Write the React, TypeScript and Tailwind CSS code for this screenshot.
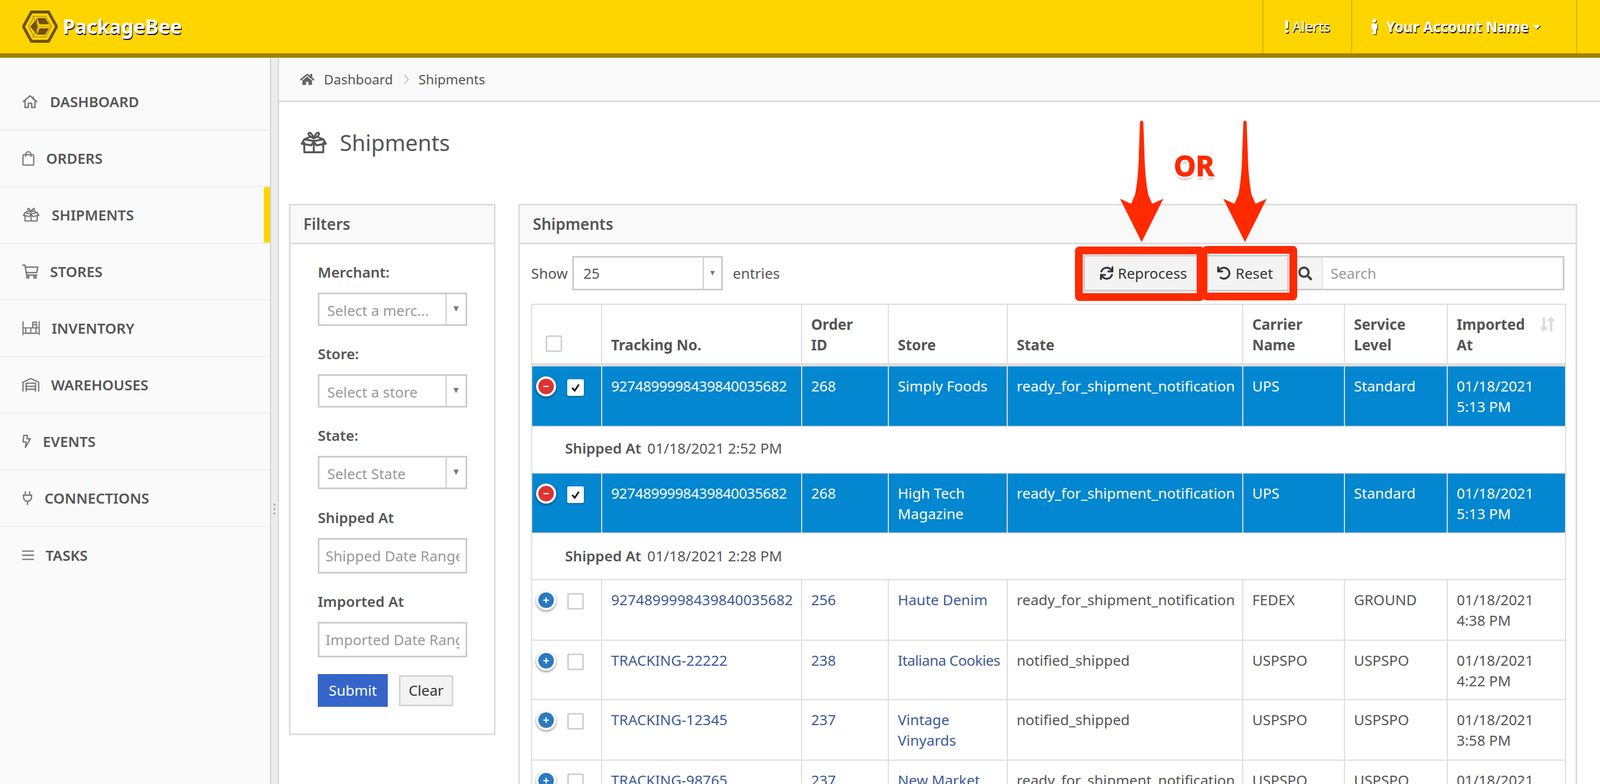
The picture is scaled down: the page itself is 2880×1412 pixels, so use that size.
import React from "react";
import { FaSync, FaUndo, FaSearch, FaHome, FaMale, FaLongArrowAltDown, FaLongArrowAltUp, FaCaretDown } from "react-icons/fa";

const ic = { fill: "none", stroke: "#777", strokeWidth: 2.5, strokeLinecap: "round" as const, strokeLinejoin: "round" as const };

const Logo = () => (
  <svg width="64" height="58" viewBox="0 0 62 56" className="shrink-0">
    <polygon points="16,2.5 46,2.5 60,28 46,53.5 16,53.5 2,28" fill="none" stroke="#6d5019" strokeWidth="5" strokeLinejoin="round" />
    <polygon points="21,10 41,10 51,28 41,46 21,46 11,28" fill="none" stroke="#b08b10" strokeWidth="1.5" />
    <polygon points="14,28 25.5,14 26.5,28 25.5,42" fill="#6d5019" />
    <polygon points="26,13 40,13 47,24 30,24" fill="#6d5019" />
    <polygon points="30,31 47,31 40,42 26,42" fill="#6d5019" />
    <path d="M28 28 L51 28 M28 28 L18 9 M28 28 L18 47" stroke="#b08b10" strokeWidth="1.2" fill="none" />
  </svg>
);

const HomeIcon = () => (
  <svg width="28" height="24" viewBox="0 0 28 24" {...ic}>
    <path d="M2 12 L14 1.5 L26 12" />
    <path d="M5 10 V22.5 H11 V15 H17 V22.5 H23 V10" />
    <path d="M20 4 V8" />
  </svg>
);
const BagIcon = () => (
  <svg width="24" height="29" viewBox="0 0 24 29" {...ic}>
    <rect x="1.5" y="7" width="21" height="20.5" rx="2" />
    <path d="M7 10 V6 C7 -0.2 17 -0.2 17 6 V10" />
  </svg>
);
const GiftIcon = ({ s = 1 }: { s?: number }) => (
  <svg width={32 * s} height={26 * s} viewBox="0 0 32 26" {...ic} strokeWidth={2.2} stroke={s > 1 ? "#555" : "#777"}>
    <path d="M5 13 V24 H16 H27 V13" />
    <path d="M16 24 V11" />
    <path d="M2 14 L5 9 L16 11 L27 9 L30 14 L19 16 L16 11 L13 16 Z" />
    <path d="M5 9 L12 6 M27 9 L20 6" />
    <path d="M16 8 C12 6 9 4 10 2 C11 0 14 2 16 8 C18 2 21 0 22 2 C23 4 20 6 16 8 Z" />
  </svg>
);
const CartIcon = () => (
  <svg width="29" height="26" viewBox="0 0 29 26" {...ic}>
    <path d="M1 1.5 H5 L8 19.5 H26" />
    <path d="M6 5 H28 L26 15 H7.5" />
    <circle cx="10" cy="23" r="2" />
    <circle cx="23" cy="23" r="2" />
  </svg>
);
const ShelfIcon = () => (
  <svg width="33" height="27" viewBox="0 0 33 27" {...ic} strokeWidth={2.2} strokeLinecap="butt">
    <path d="M1.5 0 V26 M31.5 0 V26" />
    <path d="M1.5 22.5 H31.5 M1.5 12.5 H31.5" />
    <path d="M6.5 12.5 V22.5 H25.5 V12.5 M16 12.5 V22.5" />
    <path d="M19.5 12.5 V2 H26.5 V12.5 M19.5 6.5 H26.5" />
  </svg>
);
const WareIcon = () => (
  <svg width="33" height="26" viewBox="0 0 33 26" {...ic} strokeLinecap="butt">
    <path d="M1.5 26 V8 L16.5 1 L31.5 8 V26" />
    <path d="M7.5 26 V10 H25.5 V26" />
    <path d="M7.5 16 H25.5 M7.5 21.5 H25.5" />
  </svg>
);
const BoltIcon = () => (
  <svg width="17" height="26" viewBox="0 0 17 26" {...ic}>
    <path d="M3 1.5 H10 L9 8 H15.5 L6 24.5 L7.5 14 H1.5 Z" />
  </svg>
);
const PlugIcon = () => (
  <svg width="20" height="26" viewBox="0 0 20 26" {...ic} strokeLinecap="butt">
    <path d="M6 0 V7 M14 0 V7" />
    <path d="M1 7.5 H19 M2.5 7.5 V12 C2.5 16 6 19 10 19 C14 19 17.5 16 17.5 12 V7.5" />
    <path d="M10 19 V26" />
  </svg>
);
const MenuIcon = () => (
  <svg width="23" height="20" viewBox="0 0 23 20" {...ic} strokeLinecap="butt">
    <path d="M0 2 H23 M0 10 H23 M0 18 H23" />
  </svg>
);

const nav = [
  { label: "DASHBOARD", icon: <HomeIcon />, w: "w-[29px]" },
  { label: "ORDERS", icon: <BagIcon />, w: "w-[22px]" },
  { label: "SHIPMENTS", icon: <GiftIcon />, w: "w-[32px]", active: true },
  { label: "STORES", icon: <CartIcon />, w: "w-[29px]" },
  { label: "INVENTORY", icon: <ShelfIcon />, w: "w-[32px]" },
  { label: "WAREHOUSES", icon: <WareIcon />, w: "w-[31px]" },
  { label: "EVENTS", icon: <BoltIcon />, w: "w-[16px]" },
  { label: "CONNECTIONS", icon: <PlugIcon />, w: "w-[19px]" },
  { label: "TASKS", icon: <MenuIcon />, w: "w-[21px]", last: true },
];

const Sidebar = () => (
  <aside className="w-[486px] shrink-0 bg-[#fafafa] pt-[29px]">
    {nav.map((n) => (
      <div key={n.label} className={`relative flex h-[102px] items-center gap-[21px] pl-[40px] text-[26px] font-semibold text-[#555] ${n.last ? "" : "border-b-2 border-[#efefef]"}`}>
        <span className={`${n.w} flex shrink-0 items-center`}>{n.icon}</span>
        <span className="leading-none">{n.label}</span>
        {n.active && <span className="absolute right-0 top-0 bottom-0 w-[11px] bg-[#ffd500]" />}
      </div>
    ))}
  </aside>
);

const Splitter = () => (
  <div className="flex w-[16px] shrink-0 flex-col items-center justify-start border-x-2 border-[#d2d2d2] bg-[#ececec] pt-[803px]">
    <div className="flex flex-col gap-[4px]">
      <span className="h-[4px] w-[4px] bg-[#bbb]" />
      <span className="h-[4px] w-[4px] bg-[#bbb]" />
      <span className="h-[4px] w-[4px] bg-[#bbb]" />
    </div>
  </div>
);

const shadow = "[text-shadow:1px_2px_0_#000]";

const Header = () => (
  <header className="flex h-[104px] border-b-[8px] border-[#a08000] bg-[#ffd500] pl-[40px] pr-[41px]">
    <div className="flex items-center gap-[9px]">
      <Logo />
      <span className={`text-[35.5px] font-bold text-white ${shadow}`}>PackageBee</span>
    </div>
    <div className="ml-auto flex">
      <div className={`flex w-[160px] items-center gap-[6px] border-l-2 border-[#d6b400] pl-[38px] text-[25px] text-white ${shadow}`}>
        <span className="text-[30px] font-extrabold leading-none">!</span>
        <span>Alerts</span>
      </div>
      <div className={`flex w-[407px] items-center border-x-2 border-[#d6b400] pl-[32px] text-[26px] font-bold text-white ${shadow}`}>
        <FaMale className="mr-[13px] h-[28px] w-[16px] text-white drop-shadow-[1px_1px_0_#000]" />
        <span>Your Account Name</span>
        <FaCaretDown className="ml-[3px] h-[22px] w-[22px] drop-shadow-[1px_1px_0_#000]" />
      </div>
    </div>
  </header>
);

const Arrow = ({ pos }: { pos: string }) => (
  <svg width="78" height="220" viewBox="0 0 78 220" className={`absolute top-[216px] ${pos}`}>
    <path d="M36 4 Q39 -2 42 4 L44 60 Q45 105 51 135 L58 151 L78 142 L39 220 L0 142 L20 151 L27 135 Q33 105 34 60 Z" fill="#ff2a00" />
  </svg>
);

const Select = ({ text, w = "w-[269px]", mb = "" }: { text: string; w?: string; mb?: string }) => (
  <div className={`flex h-[60px] items-stretch border-[3px] border-[#ccc] bg-white text-[26px] ${w} ${mb}`}>
    <span className="flex flex-1 items-center overflow-hidden whitespace-nowrap pl-[14px] pt-[5px] text-[#999]">{text}</span>
    <span className="flex w-[36px] items-center justify-center border-l-2 border-[#ccc] pb-[4px] text-[16px] text-[#777]">▼</span>
  </div>
);

const FilterLabel = ({ children }: { children: React.ReactNode }) => (
  <div className="mb-[18px] text-[26px] font-semibold leading-[37px] text-[#555]">{children}</div>
);

const DateInput = ({ placeholder, mb }: { placeholder: string; mb: string }) => (
  <input readOnly placeholder={placeholder} className={`block h-[64px] w-[269px] border-[3px] border-[#ccc] bg-white px-[11px] text-[26px] outline-none placeholder:text-[#999] ${mb}`} />
);

const Filters = () => (
  <section className="w-[372px] shrink-0 self-start border-[3px] border-[#ddd] bg-white">
    <div className="flex h-[70px] items-center border-b-[3px] border-[#ddd] bg-[#f9f9f9] pb-[2px] pl-[23px] text-[28px] font-semibold text-[#555]">Filters</div>
    <div className="px-[49px] pb-[48px] pt-[32px]">
      <FilterLabel>Merchant:</FilterLabel>
      <Select text="Select a merc..." mb="mb-[32px]" />
      <FilterLabel>Store:</FilterLabel>
      <Select text="Select a store" mb="mb-[32px]" />
      <FilterLabel>State:</FilterLabel>
      <Select text="Select State" mb="mb-[33px]" />
      <FilterLabel>Shipped At</FilterLabel>
      <DateInput placeholder="Shipped Date Range" mb="mb-[32px]" />
      <FilterLabel>Imported At</FilterLabel>
      <DateInput placeholder="Imported Date Range" mb="mb-[30px]" />
      <div className="flex items-center gap-[20px]">
        <button className="h-[59px] w-[126px] bg-[#3565c9] text-[26px] text-white">Submit</button>
        <button className="h-[56px] w-[98px] border-[3px] border-[#d5d5d5] bg-[#f3f3f3] text-[26px] text-[#333]">Clear</button>
      </div>
    </div>
  </section>
);

const Circle = ({ kind }: { kind: "minus" | "plus" }) => (
  <span className={`flex h-[36px] w-[36px] shrink-0 items-center justify-center rounded-full border-[4px] border-white shadow-[0_2px_4px_rgba(0,0,0,0.45)] ${kind === "minus" ? "bg-[#dd3333]" : "bg-[#2b7abf]"}`}>
    <svg width="14" height="14" viewBox="0 0 14 14" stroke="#fff" strokeWidth="2.2">
      <path d="M2 7 H12" />
      {kind === "plus" && <path d="M7 2 V12" />}
    </svg>
  </span>
);

const Check = ({ on }: { on?: boolean }) => (
  <span className={`flex h-[30px] w-[30px] shrink-0 items-center justify-center rounded-[3px] bg-white ${on ? "shadow-[0_1px_3px_rgba(0,0,0,0.4)]" : "border-[3px] border-[#d2d2d2]"}`}>
    {on && (
      <svg width="18" height="18" viewBox="0 0 18 18" fill="none" stroke="#111" strokeWidth="3">
        <path d="M3 9.5 L7.5 14.5 L15 3.5" />
      </svg>
    )}
  </span>
);

type Row = {
  h: string;
  sel?: boolean;
  track: string;
  order: string;
  store: React.ReactNode;
  state: string;
  carrier: string;
  level: string;
  time: string;
};

const TN = "927489999843984003568";
const READY = "ready_for_shipment_notification";

const rows: (Row | { detail: string; h: string; pt: string })[] = [
  { h: "h-[109px]", sel: true, track: TN + "2", order: "268", store: "Simply Foods", state: READY, carrier: "UPS", level: "Standard", time: "5:13 PM" },
  { detail: "01/18/2021 2:52 PM", h: "h-[84px]", pt: "pt-[20px]" },
  { h: "h-[108px]", sel: true, track: TN + "2", order: "268", store: "High Tech Magazine", state: READY, carrier: "UPS", level: "Standard", time: "5:13 PM" },
  { detail: "01/18/2021 2:28 PM", h: "h-[84px]", pt: "pt-[22px]" },
  { h: "h-[109px]", track: TN + "2", order: "256", store: "Haute Denim", state: READY, carrier: "FEDEX", level: "GROUND", time: "4:38 PM" },
  { h: "h-[107px]", track: "TRACKING-22222", order: "238", store: <span className="tracking-[-0.6px]">Italiana Cookies</span>, state: "notified_shipped", carrier: "USPSPO", level: "USPSPO", time: "4:22 PM" },
  { h: "h-[109px]", track: "TRACKING-12345", order: "237", store: <>Vintage<br />Vinyards</>, state: "notified_shipped", carrier: "USPSPO", level: "USPSPO", time: "3:58 PM" },
  { h: "h-[108px]", track: "TRACKING-98765", order: "237", store: "New Market", state: READY, carrier: "USPSPO", level: "USPSPO", time: "3:41 PM" },
];

const thBase = "border-r-2 border-b-[6px] border-[#ddd] pb-[14px] pl-[16px] pr-[2px] align-bottom text-left font-bold";

const DataRow = ({ r }: { r: Row }) => {
  const td = `border-r-2 border-b-2 border-[#ddd] pl-[16px] pr-[2px] pt-[17px] align-top ${r.h}`;
  const link = r.sel ? "" : "text-[#3d5a9a]";
  return (
    <tr className={r.sel ? "bg-[#0287d0] text-white" : ""}>
      <td className={`border-r-2 border-b-2 border-[#ddd] pl-[7px] pt-[18px] align-top ${r.h}`}>
        <div className="flex items-start gap-[20px]">
          <Circle kind={r.sel ? "minus" : "plus"} />
          <span className="mt-[5px]"><Check on={r.sel} /></span>
        </div>
      </td>
      <td className={`${td} ${link} ${r.sel ? "tracking-[-0.5px]" : ""}`}>{r.track}</td>
      <td className={`${td} ${link}`}>{r.order}</td>
      <td className={`${td} ${link}`}>{r.store}</td>
      <td className={td}>{r.state}</td>
      <td className={td}>{r.carrier}</td>
      <td className={td}>{r.level}</td>
      <td className={`${td} whitespace-pre-line`}>{`01/18/2021\n${r.time}`}</td>
    </tr>
  );
};

const ShipTable = () => (
  <table className="w-[1861px] table-fixed border-separate border-spacing-0 border-l-2 border-t-[2px] border-[#ddd] text-[26px] leading-[37px] text-[#555]">
    <colgroup>
      <col className="w-[126px]" />
      <col className="w-[360px]" />
      <col className="w-[156px]" />
      <col className="w-[214px]" />
      <col className="w-[424px]" />
      <col className="w-[183px]" />
      <col className="w-[185px]" />
      <col className="w-[213px]" />
    </colgroup>
    <thead>
      <tr>
        <th className="h-[111px] border-r-2 border-b-[6px] border-[#ddd] pb-[20px] pl-[24px] align-bottom"><Check /></th>
        <th className={thBase}>Tracking No.</th>
        <th className={thBase}>Order<br />ID</th>
        <th className={thBase}>Store</th>
        <th className={thBase}>State</th>
        <th className={thBase}>Carrier<br />Name</th>
        <th className={thBase}>Service<br />Level</th>
        <th className={`${thBase} relative`}>
          Imported<br />At
          <span className="absolute right-[17px] top-[20px] flex text-[#ddd]">
            <FaLongArrowAltDown className="-mr-[3px] h-[30px] w-[16px]" />
            <FaLongArrowAltUp className="h-[30px] w-[16px]" />
          </span>
        </th>
      </tr>
    </thead>
    <tbody>
      {rows.map((r, i) =>
        "detail" in r ? (
          <tr key={i}>
            <td colSpan={8} className={`border-r-2 border-b-2 border-[#ddd] pl-[59px] align-top ${r.pt} ${r.h}`}>
              <span className="mr-[11px] font-semibold">Shipped At</span>
              {r.detail}
            </td>
          </tr>
        ) : (
          <DataRow key={i} r={r} />
        )
      )}
    </tbody>
  </table>
);

const ShipmentsPanel = () => (
  <section className="w-[1906px] shrink-0 border-[3px] border-b-0 border-[#ddd] bg-white">
    <div className="flex h-[70px] items-center border-b-[3px] border-[#ddd] bg-[#f9f9f9] pb-[2px] pl-[23px] text-[28px] font-semibold text-[#555]">Shipments</div>
    <div className="px-[20px] pt-[20px]">
      <div className="mb-[23px] flex h-[64px] items-center text-[26px] text-[#555]">
        <span className="mr-[8px]">Show</span>
        <div className="flex h-[62px] w-[271px] items-stretch border-[3px] border-[#ccc] bg-white">
          <span className="flex flex-1 items-center pl-[17px]">25</span>
          <span className="flex w-[33px] items-center justify-center border-l-2 border-[#ccc] pb-[4px] text-[14px] text-[#777]">▼</span>
        </div>
        <span className="ml-[18px]">entries</span>
        <button className="ml-auto flex h-[66px] w-[208px] items-center justify-start gap-[8px] border-[3px] border-[#ccc] bg-[#f3f3f3] pl-[27px] text-[26px] text-[#333]">
          <FaSync className="h-[24px] w-[24px]" />Reprocess
        </button>
        <button className="ml-[14px] flex h-[66px] w-[148px] items-center justify-start gap-[9px] border-[3px] border-[#ccc] bg-[#f3f3f3] pl-[16px] text-[26px] text-[#333]">
          <FaUndo className="h-[24px] w-[24px]" />Reset
        </button>
        <span className="flex h-[62px] w-[61px] items-center justify-end border-y-[3px] border-r-2 border-[#ccc] border-r-[#e5e5e5] bg-[#f5f5f5] pr-[17px] text-[#444]">
          <FaSearch className="h-[25px] w-[25px]" />
        </span>
        <input readOnly placeholder="Search" className="h-[62px] w-[435px] border-y-[3px] border-r-[3px] border-[#ccc] bg-white pl-[14px] text-[26px] outline-none placeholder:text-[#999]" />
      </div>
      <ShipTable />
    </div>
  </section>
);

export default function App() {
  return (
    <div className="relative h-[1412px] w-[2880px] overflow-hidden bg-white font-['Open_Sans',sans-serif]">
      <Header />
      <div className="flex h-[1308px]">
        <Sidebar />
        <Splitter />
        <main className="min-w-0 flex-1">
          <div className="flex h-[80px] items-center border-b-[3px] border-[#ddd] bg-[#f9f9f9] pl-[38px] text-[24px] text-[#555]">
            <FaHome className="mr-[17px] h-[24px] w-[26px] text-[#666]" />
            <span>Dashboard</span>
            <svg width="10" height="18" viewBox="0 0 10 18" className="ml-[20px] mr-[16px]" fill="none" stroke="#c4c4c4" strokeWidth="2"><path d="M1 1 L8 9 L1 17" /></svg>
            <span>Shipments</span>
          </div>
          <div className="flex h-[183px] items-start gap-[22px] pl-[38px] pt-[45px] text-[40px] leading-[56px] text-[#555]">
            <span className="flex h-[56px] items-center"><GiftIcon s={1.55} /></span>
            <span className="tracking-[-0.2px]">Shipments</span>
          </div>
          <div className="flex gap-[41px] pl-[18px]">
            <Filters />
            <ShipmentsPanel />
          </div>
        </main>
      </div>

      <Arrow pos="left-[2016px]" />
      <Arrow pos="left-[2202px]" />
      <div className="absolute left-[2113px] top-[269px] font-['Liberation_Sans',sans-serif] text-[50px] font-bold leading-[58px] text-[#ff2a00] [-webkit-text-stroke:1.5px_#ff2a00] [text-shadow:4px_0_0_#fff,-4px_0_0_#fff,0_4px_0_#fff,0_-4px_0_#fff,3px_3px_0_#fff,-3px_3px_0_#fff,3px_-3px_0_#fff,-3px_-3px_0_#fff,0_6px_4px_rgba(0,0,0,0.3)]">OR</div>
      <div className="absolute left-[1935px] top-[444px] h-[98px] w-[233px] rounded-[8px] border-y-[14px] border-x-[14px] border-[#ff2a00]" />
      <div className="absolute left-[2164px] top-[443px] h-[98px] w-[171px] rounded-[8px] border-y-[14px] border-r-[14px] border-l-[9px] border-[#ff2a00]" />
    </div>
  );
}
